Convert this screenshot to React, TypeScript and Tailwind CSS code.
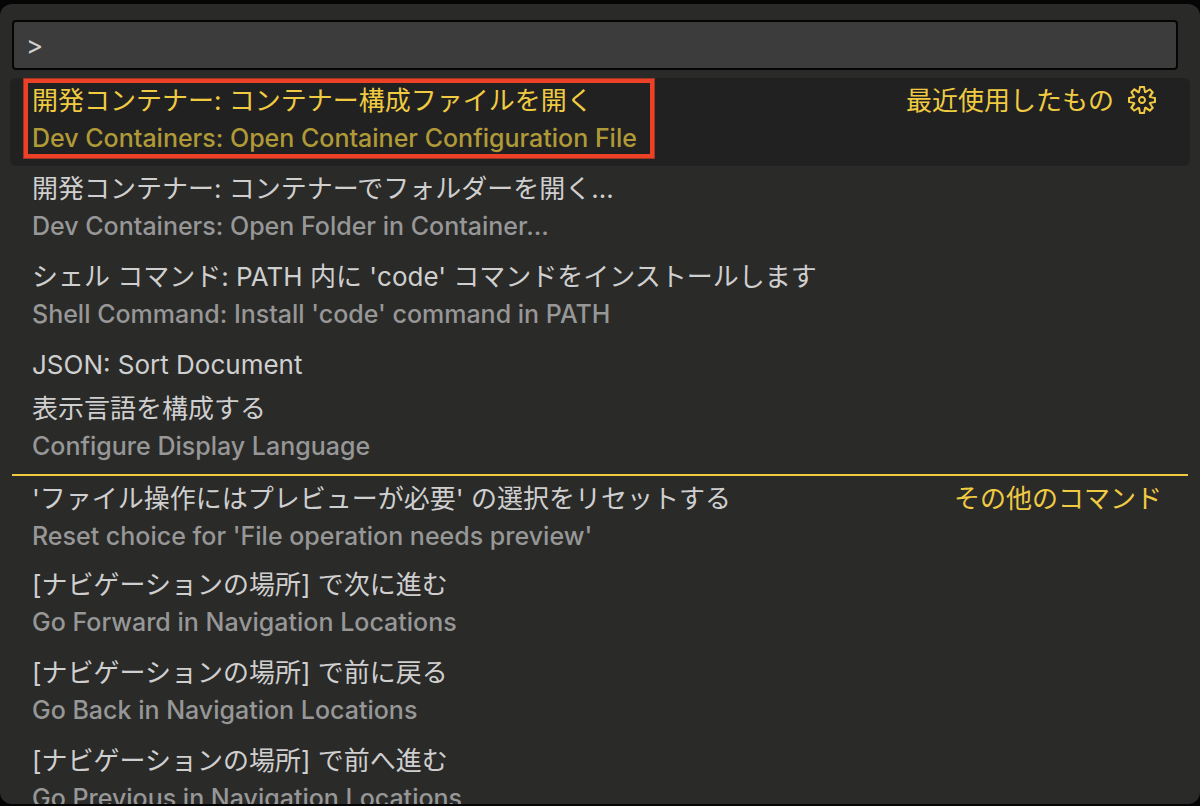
import React, { useState } from 'react';
import clsx from 'clsx';

type Command = {
  label: string;
  detail?: string;
  group?: string;
  configurable?: boolean;
  highlighted?: boolean;
};

const commands: Command[] = [
  {
    label: '開発コンテナー: コンテナー構成ファイルを開く',
    detail: 'Dev Containers: Open Container Configuration File',
    group: '最近使用したもの',
    configurable: true,
    highlighted: true,
  },
  { label: '開発コンテナー: コンテナーでフォルダーを開く...', detail: 'Dev Containers: Open Folder in Container...' },
  {
    label: "シェル コマンド: PATH 内に 'code' コマンドをインストールします",
    detail: "Shell Command: Install 'code' command in PATH",
  },
  { label: 'JSON: Sort Document' },
  { label: '表示言語を構成する', detail: 'Configure Display Language' },
  {
    label: "'ファイル操作にはプレビューが必要' の選択をリセットする",
    detail: "Reset choice for 'File operation needs preview'",
    group: 'その他のコマンド',
  },
  { label: '[ナビゲーションの場所] で次に進む', detail: 'Go Forward in Navigation Locations' },
  { label: '[ナビゲーションの場所] で前に戻る', detail: 'Go Back in Navigation Locations' },
  { label: '[ナビゲーションの場所] で前へ進む', detail: 'Go Previous in Navigation Locations' },
];

const GearIcon: React.FC = () => (
  <svg className="h-8 w-8" viewBox="0 0 16 16" fill="currentColor" aria-hidden="true">
    <path
      fillRule="evenodd"
      clipRule="evenodd"
      d="M9.1 4.4L8.6 2H7.4l-.5 2.4-.7.3-2-1.3-.9.8 1.3 2-.2.7-2.4.5v1.2l2.4.5.3.8-1.3 2 .8.8 2-1.3.8.3.4 2.3h1.2l.5-2.4.8-.3 2 1.3.8-.8-1.3-2 .3-.8 2.3-.4V7.4l-2.4-.5-.3-.8 1.3-2-.8-.8-2 1.3-.7-.2zM9.4 1l.5 2.4L12 2.1l2 2-1.4 2.1 2.4.4v2.8l-2.4.5L14 12l-2 2-2.1-1.4-.5 2.4H6.6l-.5-2.4L4 13.9l-2-2 1.4-2.1L1 9.4V6.6l2.4-.5L2.1 4l2-2 2.1 1.4.4-2.4h2.8zm.6 7c0 1.1-.9 2-2 2s-2-.9-2-2 .9-2 2-2 2 .9 2 2zM8 9c.6 0 1-.4 1-1s-.4-1-1-1-1 .4-1 1 .4 1 1 1z"
    />
  </svg>
);

const CommandRow: React.FC<{ command: Command; active: boolean; onSelect: () => void }> = ({
  command,
  active,
  onSelect,
}) => {
  const separated = Boolean(command.group) && !command.configurable;

  return (
    <li>
      {separated && <hr className="mx-0.5 h-0.5 border-0 bg-[#f0c93f]" />}
      <div
        className={clsx(
          'relative flex items-start justify-between rounded-md pl-[22px]',
          command.configurable ? 'pr-8' : 'pr-7',
          separated ? 'h-[86px]' : command.detail ? 'h-[88px]' : 'h-11',
          active ? 'bg-[#212121] text-[#f0cb42]' : 'text-[#cfcfcf]'
        )}
      >
        <button type="button" onClick={onSelect} className="min-w-0 flex-1 text-left whitespace-nowrap">
          <span className="block h-11 text-[26px] leading-[46px]">{command.label}</span>
          {command.detail && (
            <span
              className={clsx('block text-[25px] leading-8 font-medium', active ? 'text-[#b09a38]' : 'text-[#979797]')}
            >
              {command.detail}
            </span>
          )}
        </button>
        {command.group && (
          <div className="flex h-11 items-center gap-3 text-[26px] text-[#f0cb42]">
            <span>{command.group}</span>
            {command.configurable && (
              <button type="button" aria-label="キー バインドの構成">
                <GearIcon />
              </button>
            )}
          </div>
        )}
        {command.highlighted && (
          <div className="pointer-events-none absolute top-0 left-[13px] h-[81px] w-[632px] border border-[#9c3524]">
            <div className="h-full border-4 border-[#ec4126]" />
          </div>
        )}
      </div>
    </li>
  );
};

const App: React.FC = () => {
  const [query, setQuery] = useState('>');
  const [selected, setSelected] = useState(0);

  return (
    <div className="flex h-screen flex-col bg-[#050505] pt-1 pb-0.5 font-[Inter,'Noto_Sans_CJK_JP',sans-serif]">
      <main className="min-h-0 flex-1 overflow-hidden rounded-xl bg-[#2a2a29] pt-4">
        <div className="pr-[22px] pl-3">
          <input
            type="text"
            aria-label="コマンド パレット"
            value={query}
            onChange={(e) => setQuery(e.target.value)}
            className="block h-[50px] w-full rounded-sm border-2 border-[#050505] bg-[#3c3c3c] px-3 text-[26px] text-[#cfcfcf] outline-none"
          />
        </div>
        <ul className="px-2.5 pt-2">
          {commands.map((command, index) => (
            <CommandRow
              key={command.label}
              command={command}
              active={index === selected}
              onSelect={() => setSelected(index)}
            />
          ))}
        </ul>
      </main>
    </div>
  );
};

export default App;
